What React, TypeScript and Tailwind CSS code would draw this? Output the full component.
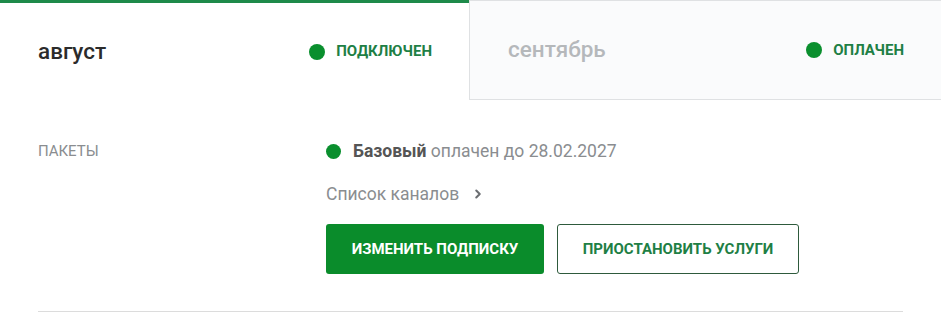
import { ChevronRight } from "lucide-react";

function StatusDot({ size = "w-[16px] h-[16px]" }: { size?: string }) {
  return <span className={`inline-block ${size} rounded-full bg-[#0a8f2e] shrink-0`} />;
}

export default function App() {
  return (
    <div className="w-[941px] h-[313px] bg-white font-['Roboto',sans-serif] overflow-hidden">
      <div className="flex h-[100px]">
        <div className="w-[469px] border-t-[3px] border-[#1e8a4a] flex items-center justify-between pl-[38px] pr-[37px]">
          <span className="text-[22.5px] font-medium text-[#2b2b2b]">август</span>
          <span className="flex items-center gap-[11px]">
            <StatusDot />
            <span className="text-[15px] font-bold text-[#1e7f45] uppercase">подключен</span>
          </span>
        </div>
        <div className="flex-1 bg-[#fafbfc] border-l border-t border-b border-[#dfe1e3] flex items-center justify-between pl-[38px] pr-[37px]">
          <span className="text-[22.5px] font-medium text-[#b5b8bb]">сентябрь</span>
          <span className="flex items-center gap-[11px]">
            <StatusDot />
            <span className="text-[15px] font-bold text-[#1e7f45] uppercase">оплачен</span>
          </span>
        </div>
      </div>
      <div className="mx-[38px] pt-[41px] border-b border-[#dcdcdc] h-[212px]">
        <div className="flex">
          <div className="w-[288px] h-[20px] flex items-center text-[15px] text-[#8a8d90] uppercase">пакеты</div>
          <div className="flex flex-col">
            <div className="flex items-center gap-[12px] h-[20px]">
              <StatusDot size="w-[15px] h-[15px]" />
              <span className="text-[17.5px] text-[#8a8d90]">
                <span className="font-bold text-[#555]">Базовый</span> оплачен до 28.02.2027
              </span>
            </div>
            <div className="flex items-center mt-[23px] h-[20px] text-[17.5px] text-[#8a8d90]">
              Список каналов
              <ChevronRight className="ml-[12px] w-[14px] h-[14px] text-[#6b6e72]" strokeWidth={3.5} />
            </div>
            <div className="flex gap-[13px] mt-[20px]">
              <button className="w-[218px] h-[50px] rounded-[3px] bg-[#0a8c2b] text-white text-[15px] font-bold uppercase">
                изменить подписку
              </button>
              <button className="w-[242px] h-[50px] rounded-[3px] border border-[#2e5a3c] bg-white text-[#1e7f45] text-[15px] font-bold uppercase">
                приостановить услуги
              </button>
            </div>
          </div>
        </div>
      </div>
    </div>
  );
}
